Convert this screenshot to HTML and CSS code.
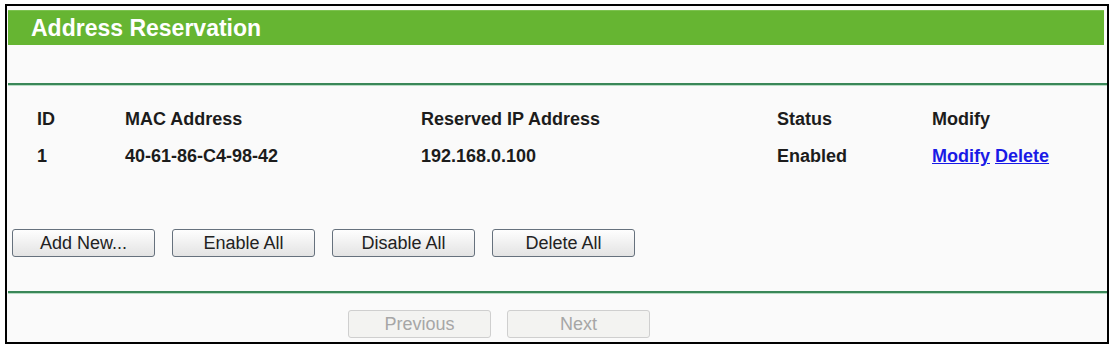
FILE: index.html
```html
<!DOCTYPE html>
<html>
<head>
<meta charset="utf-8">
<link rel="stylesheet" href="styles.css">
</head>
<body>
<div class="frame">
  <div class="title">Address Reservation</div>
  <div class="spacer"></div>
  <div class="rule"></div>
  <div class="table">
    <div class="row head">
      <div>ID</div><div>MAC Address</div><div>Reserved IP Address</div><div>Status</div><div>Modify</div>
    </div>
    <div class="row">
      <div>1</div><div>40-61-86-C4-98-42</div><div>192.168.0.100</div><div>Enabled</div><div><a href="#">Modify</a> <a href="#">Delete</a></div>
    </div>
  </div>
  <div class="actions">
    <button class="btn">Add New...</button>
    <button class="btn">Enable All</button>
    <button class="btn">Disable All</button>
    <button class="btn">Delete All</button>
  </div>
  <div class="rule rule2"></div>
  <div class="pager">
    <button class="btn" disabled>Previous</button>
    <button class="btn" disabled>Next</button>
  </div>
</div>
</body>
</html>
```
FILE: styles.css
```css
html, body {
  margin: 0;
  padding: 0;
  background: #ffffff;
}
body {
  font-family: "Liberation Sans", Arial, sans-serif;
}
.frame {
  margin: 4px 0 0 5px;
  width: 1100px;
  height: 336px;
  border: 2px solid #000;
  background: #fafafa;
  box-sizing: content-box;
  display: flex;
  flex-direction: column;
}
.title {
  margin: 4px 3px 0 1px;
  height: 35px;
  line-height: 35px;
  background: #66b532;
  border-top: 1px solid #7cc24f;
  box-sizing: border-box;
  color: #fff;
  font-weight: bold;
  font-size: 23px;
  padding-left: 23px;
}
.spacer {
  height: 38px;
}
.rule {
  margin-left: 1px;
  height: 1px;
  border-top: 2px solid #3a8758;
  border-bottom: 1px solid #b9dcc5;
  box-sizing: content-box;
  height: 0;
}
.table {
  margin-top: 15px;
  padding-left: 30px;
}
.row {
  display: grid;
  grid-template-columns: 88px 296px 356px 155px 1fr;
  height: 37px;
  line-height: 37px;
  font-size: 18px;
  font-weight: bold;
  color: #1c1c1c;
}
.row a {
  color: #1a1ae6;
  text-decoration: underline;
}
.actions {
  margin-top: 54px;
  padding-left: 5px;
  display: flex;
  gap: 17px;
}
.btn {
  width: 143px;
  height: 28px;
  padding: 0;
  font-family: "Liberation Sans", Arial, sans-serif;
  font-size: 18px;
  color: #222;
  border: 1px solid #66717d;
  border-radius: 3px;
  background: linear-gradient(#fefefe, #e3e3e3);
}
.btn:disabled {
  color: #a6a6a6;
  border-color: #cfcfcf;
  background: #f3f3f1;
}
.rule2 {
  margin-top: 34px;
}
.pager {
  margin-top: 16px;
  padding-left: 341px;
  display: flex;
  gap: 16px;
}
```
